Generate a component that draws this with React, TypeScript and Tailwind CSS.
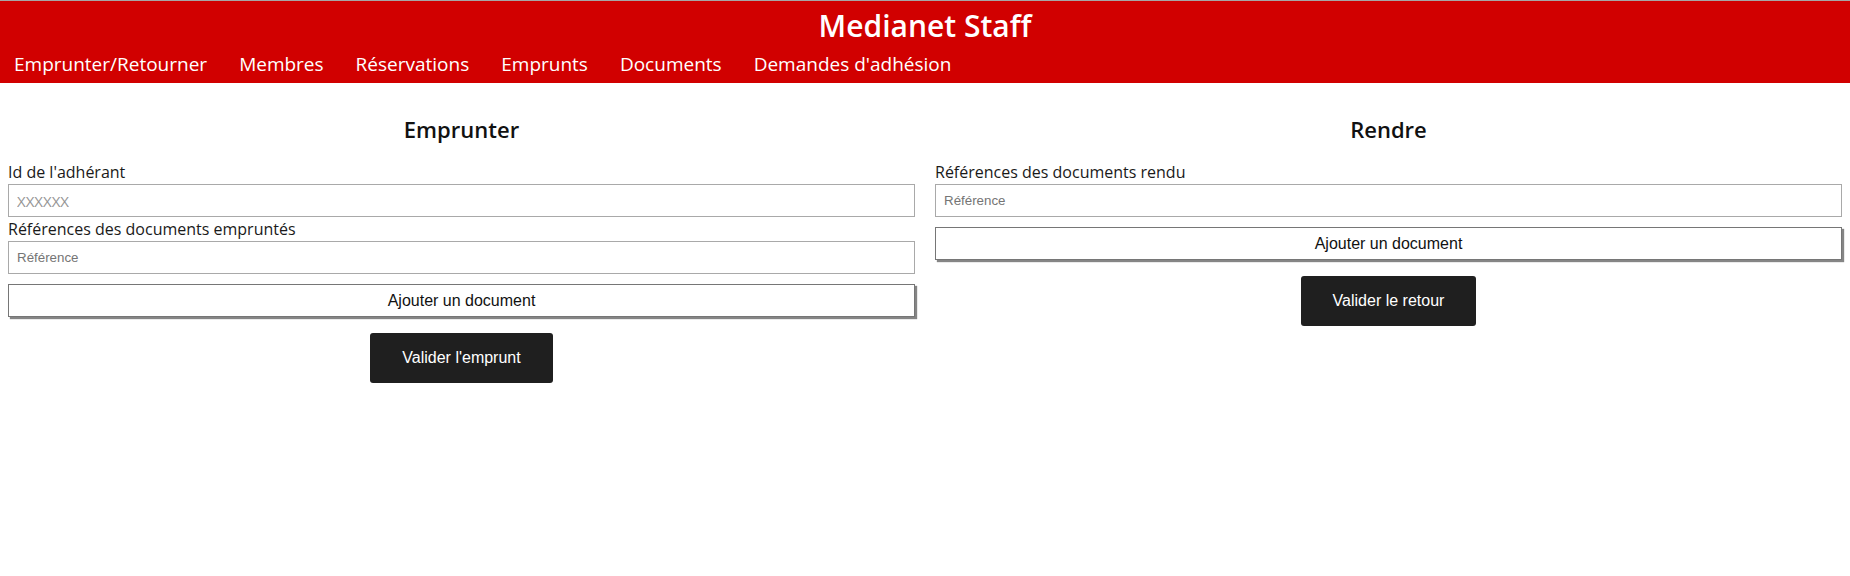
import React from "react";

const sans = "font-['Open_Sans',sans-serif]";
const arial = "font-['Liberation_Sans',Arial,sans-serif]";

function Label({ children }: { children: React.ReactNode }) {
  return (
    <div className={`${sans} text-[16px] leading-[24px] text-[#1a1a1a]`}>
      {children}
    </div>
  );
}

function RefInput() {
  return (
    <input
      type="text"
      placeholder="Référence"
      className={`${arial} block w-full h-[33px] border border-[#a9a9a9] bg-white pl-[8px] text-[13.33px] text-[#222] placeholder:text-[#757575] outline-none`}
    />
  );
}

function AddButton({ className = "" }: { className?: string }) {
  return (
    <button
      type="button"
      className={`${arial} block w-full h-[33px] bg-white border border-[#767676] shadow-[2px_2px_1px_#858585] text-[16px] leading-[18px] text-[#111] ${className}`}
    >
      Ajouter un document
    </button>
  );
}

function DarkButton({ children }: { children: React.ReactNode }) {
  return (
    <div className="flex justify-center mt-[16px]">
      <button
        type="button"
        className={`${arial} h-[50px] px-8 rounded-[3px] bg-[#1f1f1f] text-white text-[16px] leading-[18px]`}
      >
        {children}
      </button>
    </div>
  );
}

function Heading({ children }: { children: React.ReactNode }) {
  return (
    <h2
      className={`${sans} text-center text-[22px] leading-[28px] font-semibold text-[#111] mt-[32px] mb-[17px]`}
    >
      {children}
    </h2>
  );
}

export default function App() {
  const nav = [
    "Emprunter/Retourner",
    "Membres",
    "Réservations",
    "Emprunts",
    "Documents",
    "Demandes d'adhésion",
  ];
  return (
    <div className="min-h-[576px] bg-white">
      <div className="h-[1px] bg-[#a6a6a6]" />
      <header className="bg-[#d10000] text-white h-[82px] flex flex-col">
        <h1
          className={`${sans} text-center text-[30px] leading-[36px] font-semibold mt-[7px]`}
        >
          Medianet Staff
        </h1>
        <nav
          className={`${sans} flex gap-[32px] px-[14px] mt-[8px] text-[19px] leading-[24px]`}
        >
          {nav.map((n) => (
            <a key={n} className="cursor-pointer whitespace-nowrap">
              {n}
            </a>
          ))}
        </nav>
      </header>
      <main className="grid grid-cols-2 gap-5 px-2">
        <section>
          <Heading>Emprunter</Heading>
          <Label>Id de l'adhérant</Label>
          <input
            type="text"
            placeholder="XXXXXX"
            className={`${sans} block w-full h-[33px] border border-[#a9a9a9] bg-white pl-[8px] text-[15px] text-[#222] placeholder:text-[#949494] outline-none`}
          />
          <Label>Références des documents empruntés</Label>
          <RefInput />
          <AddButton className="mt-[10px]" />
          <DarkButton>Valider l'emprunt</DarkButton>
        </section>
        <section>
          <Heading>Rendre</Heading>
          <Label>Références des documents rendu</Label>
          <RefInput />
          <AddButton className="mt-[10px]" />
          <DarkButton>Valider le retour</DarkButton>
        </section>
      </main>
    </div>
  );
}
